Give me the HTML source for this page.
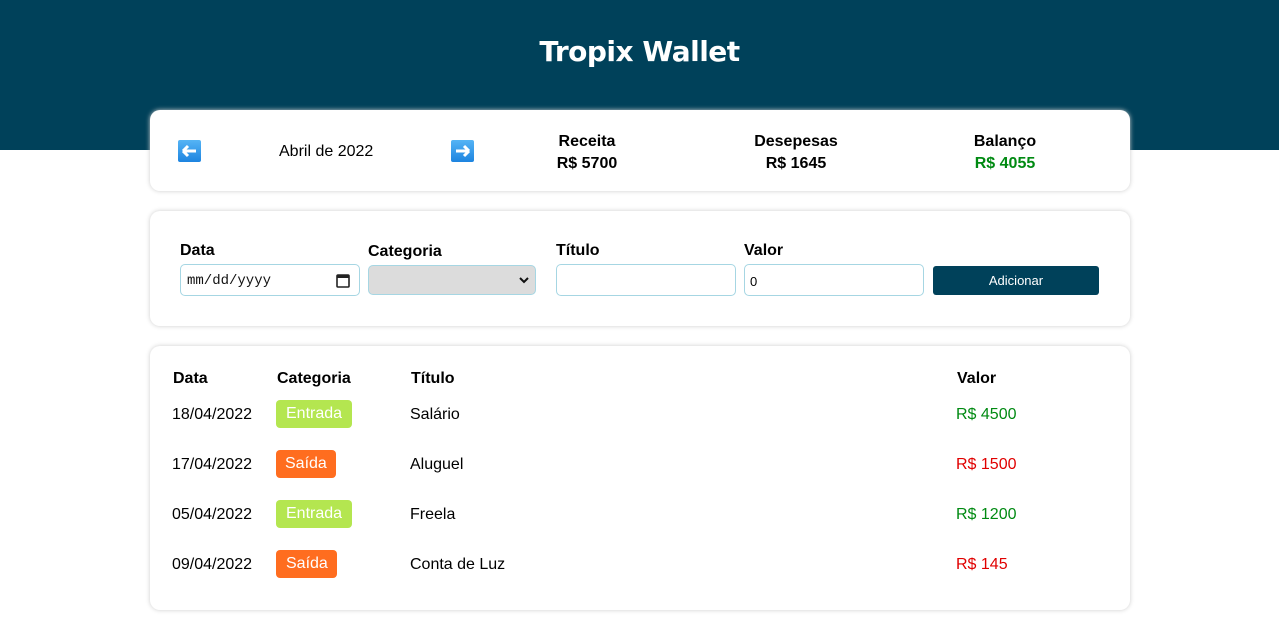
<!DOCTYPE html>
<html><head><meta charset="utf-8"><style>
*{box-sizing:border-box;margin:0;padding:0}
body{width:1279px;height:637px;background:#fff;font-family:"Liberation Sans",Arial,sans-serif;color:#000;position:relative;overflow:hidden}
.hdr{position:absolute;left:0;top:0;width:1279px;height:150px;background:#00415a}
.title{position:absolute;left:0;width:1279px;top:35px;text-align:center;color:#fff;font-family:"DejaVu Sans",sans-serif;font-weight:bold;font-size:28px;letter-spacing:-0.5px}
.card{position:absolute;left:150px;width:980px;background:#fff;border-radius:10px;box-shadow:0 0 5px #ccc}
.a{position:absolute;white-space:nowrap}
.b{font-weight:bold}
.c{text-align:center}
.arrow{position:absolute;width:23px;height:22px}
.inp{position:absolute;height:32px;border:1px solid #a6d6e3;border-radius:5px;background:#fff}
.tag{position:absolute;height:28px;border-radius:4px;color:#fff;font-size:16px;line-height:28px;padding:0 9px}
.g{color:#008a12}.r{color:#e00000}
.t{margin-top:1px}
</style></head><body>
<div class="hdr"></div>
<div class="title">Tropix Wallet</div>

<div class="card" style="top:110px;height:81px">
  <svg class="arrow" style="left:28px;top:30px" viewBox="0 0 23 22"><defs><linearGradient id="gb" x1="0" y1="0" x2="0" y2="1"><stop offset="0" stop-color="#55b4f5"/><stop offset="1" stop-color="#1d84e0"/></linearGradient></defs><rect width="23" height="22" rx="2" fill="url(#gb)"/><path d="M5 11h13M5 11l5-5M5 11l5 5" stroke="#fff" stroke-width="3" fill="none"/></svg>
  <div class="a" style="left:129px;top:33px;font-size:16px">Abril de 2022</div>
  <svg class="arrow" style="left:301px;top:30px" viewBox="0 0 23 22"><rect width="23" height="22" rx="2" fill="url(#gb)"/><path d="M5 11h13M18 11l-5-5M18 11l-5 5" stroke="#fff" stroke-width="3" fill="none"/></svg>
  <div class="a b c" style="left:387px;width:100px;top:21px;font-size:16px;line-height:22px">Receita<br>R$ 5700</div>
  <div class="a b c" style="left:596px;width:100px;top:21px;font-size:16px;line-height:22px">Desepesas<br>R$ 1645</div>
  <div class="a b c" style="left:805px;width:100px;top:21px;font-size:16px;line-height:22px">Balanço<br><span class="g">R$ 4055</span></div>
</div>

<div class="card" style="top:211px;height:115px">
  <div class="a b" style="left:30px;top:31px;font-size:16px">Data</div>
  <div class="inp" style="left:30px;top:53px;width:180px"><span style="position:absolute;left:6px;top:8px;font-family:'Liberation Mono',monospace;font-size:14px;color:#111">mm/dd/yyyy</span>
    <svg style="position:absolute;right:9px;top:8px" width="14" height="15" viewBox="0 0 14 15"><rect x="1" y="2" width="12" height="12" rx="1" fill="none" stroke="#222" stroke-width="1.6"/><rect x="1" y="2" width="12" height="3" fill="#222"/></svg></div>
  <div class="a b" style="left:218px;top:32px;font-size:16px">Categoria</div>
  <div class="inp" style="left:218px;top:54px;width:168px;height:30px;background:#dcdcdc"><svg style="position:absolute;right:6px;top:11px" width="10" height="7" viewBox="0 0 10 7"><path d="M1 1l4 4 4-4" stroke="#111" stroke-width="2" fill="none"/></svg></div>
  <div class="a b" style="left:406px;top:31px;font-size:16px">Título</div>
  <div class="inp" style="left:406px;top:53px;width:180px"></div>
  <div class="a b" style="left:594px;top:31px;font-size:16px">Valor</div>
  <div class="inp" style="left:594px;top:53px;width:180px"><span style="position:absolute;left:5px;top:9px;font-size:13px">0</span></div>
  <div class="a c" style="left:783px;top:55px;width:166px;height:29px;background:#00415a;border-radius:3px;color:#fff;font-size:13px;line-height:29px">Adicionar</div>
</div>

<div class="card" style="top:346px;height:264px">
  <div class="a b" style="left:23px;top:24px;font-size:16px">Data</div>
  <div class="a b" style="left:127px;top:24px;font-size:16px">Categoria</div>
  <div class="a b" style="left:261px;top:24px;font-size:16px">Título</div>
  <div class="a b" style="left:807px;top:24px;font-size:16px">Valor</div>

  <div class="a" style="left:22px;top:60px;font-size:16px">18/04/2022</div>
  <div class="tag" style="left:126px;top:54px;background:#b4e650;padding:0 10px">Entrada</div>
  <div class="a" style="left:260px;top:60px;font-size:16px">Salário</div>
  <div class="a g" style="left:806px;top:60px;font-size:16px">R$ 4500</div>

  <div class="a" style="left:22px;top:110px;font-size:16px">17/04/2022</div>
  <div class="tag" style="left:126px;top:104px;background:#ff6d1f">Saída</div>
  <div class="a" style="left:260px;top:110px;font-size:16px">Aluguel</div>
  <div class="a r" style="left:806px;top:110px;font-size:16px">R$ 1500</div>

  <div class="a" style="left:22px;top:160px;font-size:16px">05/04/2022</div>
  <div class="tag" style="left:126px;top:154px;background:#b4e650;padding:0 10px">Entrada</div>
  <div class="a" style="left:260px;top:160px;font-size:16px">Freela</div>
  <div class="a g" style="left:806px;top:160px;font-size:16px">R$ 1200</div>

  <div class="a" style="left:22px;top:210px;font-size:16px">09/04/2022</div>
  <div class="tag" style="left:126px;top:204px;background:#ff6d1f;padding:0 9px 0 10px">Saída</div>
  <div class="a" style="left:260px;top:210px;font-size:16px">Conta de Luz</div>
  <div class="a r" style="left:806px;top:210px;font-size:16px">R$ 145</div>
</div>
</body></html>
